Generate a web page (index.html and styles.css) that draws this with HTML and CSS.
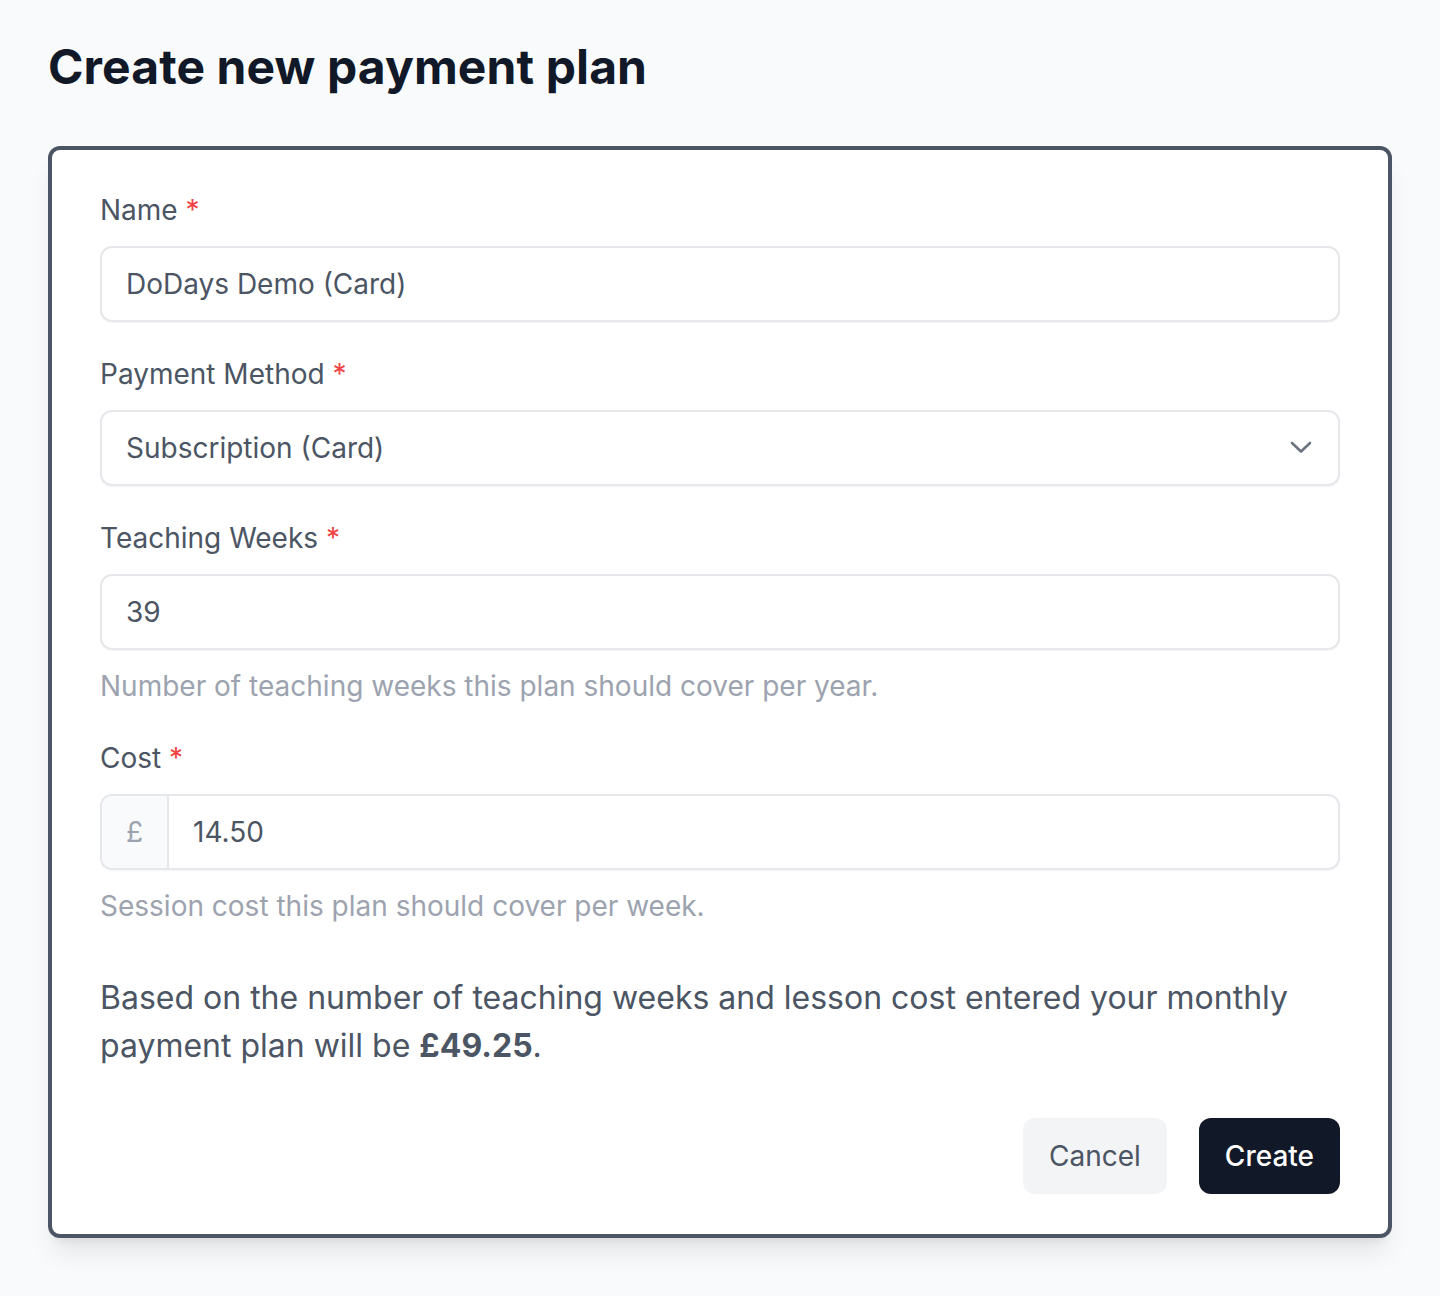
FILE: index.html
```html
<!DOCTYPE html>
<html lang="en">
<head>
<meta charset="utf-8">
<title>Create new payment plan</title>
<link rel="stylesheet" href="styles.css">
</head>
<body>
<main class="page">
  <h1 class="title">Create new payment plan</h1>
  <form class="card">
    <div class="field">
      <label class="label">Name <span class="req">*</span></label>
      <div class="input">DoDays Demo (Card)</div>
    </div>
    <div class="field">
      <label class="label">Payment Method <span class="req">*</span></label>
      <div class="input select">
        <span>Subscription (Card)</span>
        <svg class="chevron" width="24" height="24" viewBox="0 0 24 24" fill="none" stroke="currentColor" stroke-width="2.6" stroke-linecap="round" stroke-linejoin="round"><path d="M3 7l9 8.5L21 7"/></svg>
      </div>
    </div>
    <div class="field">
      <label class="label">Teaching Weeks <span class="req">*</span></label>
      <div class="input">39</div>
      <p class="help">Number of teaching weeks this plan should cover per year.</p>
    </div>
    <div class="field">
      <label class="label">Cost <span class="req">*</span></label>
      <div class="group">
        <span class="addon">£</span>
        <span class="group-input">14.50</span>
      </div>
      <p class="help">Session cost this plan should cover per week.</p>
    </div>
    <p class="summary">Based on the number of teaching weeks and lesson cost entered your monthly payment plan will be <strong>£49.25</strong>.</p>
    <div class="actions">
      <button type="button" class="btn btn-secondary">Cancel</button>
      <button type="button" class="btn btn-primary">Create</button>
    </div>
  </form>
</main>
</body>
</html>
```

FILE: styles.css
```css
* { box-sizing: border-box; }
html, body { margin: 0; padding: 0; }
body {
  background: #f9fafb;
  font-family: Inter, "Liberation Sans", sans-serif;
  color: #374151;
}
.page {
  padding: 35px 48px 48px;
}
.title {
  margin: 0 0 47px;
  font-size: 48px;
  line-height: 64px;
  font-weight: 700;
  color: #111827;
  letter-spacing: 0.1px;
}
.card {
  background: #fff;
  border: 4px solid #4b5563;
  border-radius: 12px;
  padding: 40px 48px;
  box-shadow: 0 20px 25px -5px rgba(0,0,0,0.08), 0 8px 10px -6px rgba(0,0,0,0.08);
  display: flex;
  flex-direction: column;
  gap: 32px;
}
.field {
  display: flex;
  flex-direction: column;
  gap: 16px;
}
.label {
  font-size: 28px;
  line-height: 40px;
  color: #4b5563;
}
.req { color: #ef4444; }
.input {
  height: 76px;
  border: 2px solid #e5e7eb;
  border-radius: 12px;
  padding: 0 24px;
  display: flex;
  align-items: center;
  font-size: 28px;
  color: #4b5563;
  background: #fff;
  box-shadow: 0 1px 2px rgba(0,0,0,0.04);
}
.select { justify-content: space-between; padding-right: 25px; }
.chevron { color: #6b7280; }
.help {
  margin: 0;
  font-size: 28px;
  line-height: 40px;
  color: #9ca3af;
}
.group {
  display: flex;
  height: 76px;
  border: 2px solid #e5e7eb;
  border-radius: 12px;
  overflow: hidden;
  box-shadow: 0 1px 2px rgba(0,0,0,0.04);
}
.addon {
  width: 67px;
  background: #f9fafb;
  border-right: 2px solid #e5e7eb;
  display: flex;
  align-items: center;
  justify-content: center;
  font-size: 28px;
  color: #9ca3af;
}
.group-input {
  flex: 1;
  display: flex;
  align-items: center;
  padding: 0 24px;
  font-size: 28px;
  color: #4b5563;
}
.summary {
  margin: 16px 0 0;
  font-size: 32px;
  line-height: 48px;
  color: #4b5563;
}
.summary strong { font-weight: 700; }
.actions {
  margin-top: 16px;
  display: flex;
  justify-content: flex-end;
  gap: 32px;
}
.btn {
  height: 76px;
  border: 0;
  border-radius: 12px;
  padding: 0 26px;
  font-family: inherit;
  font-size: 28px;
  cursor: pointer;
}
.btn-secondary { background: #f3f4f6; color: #4b5563; }
.btn-primary { background: #111827; color: #fff; font-weight: 500; }
```
